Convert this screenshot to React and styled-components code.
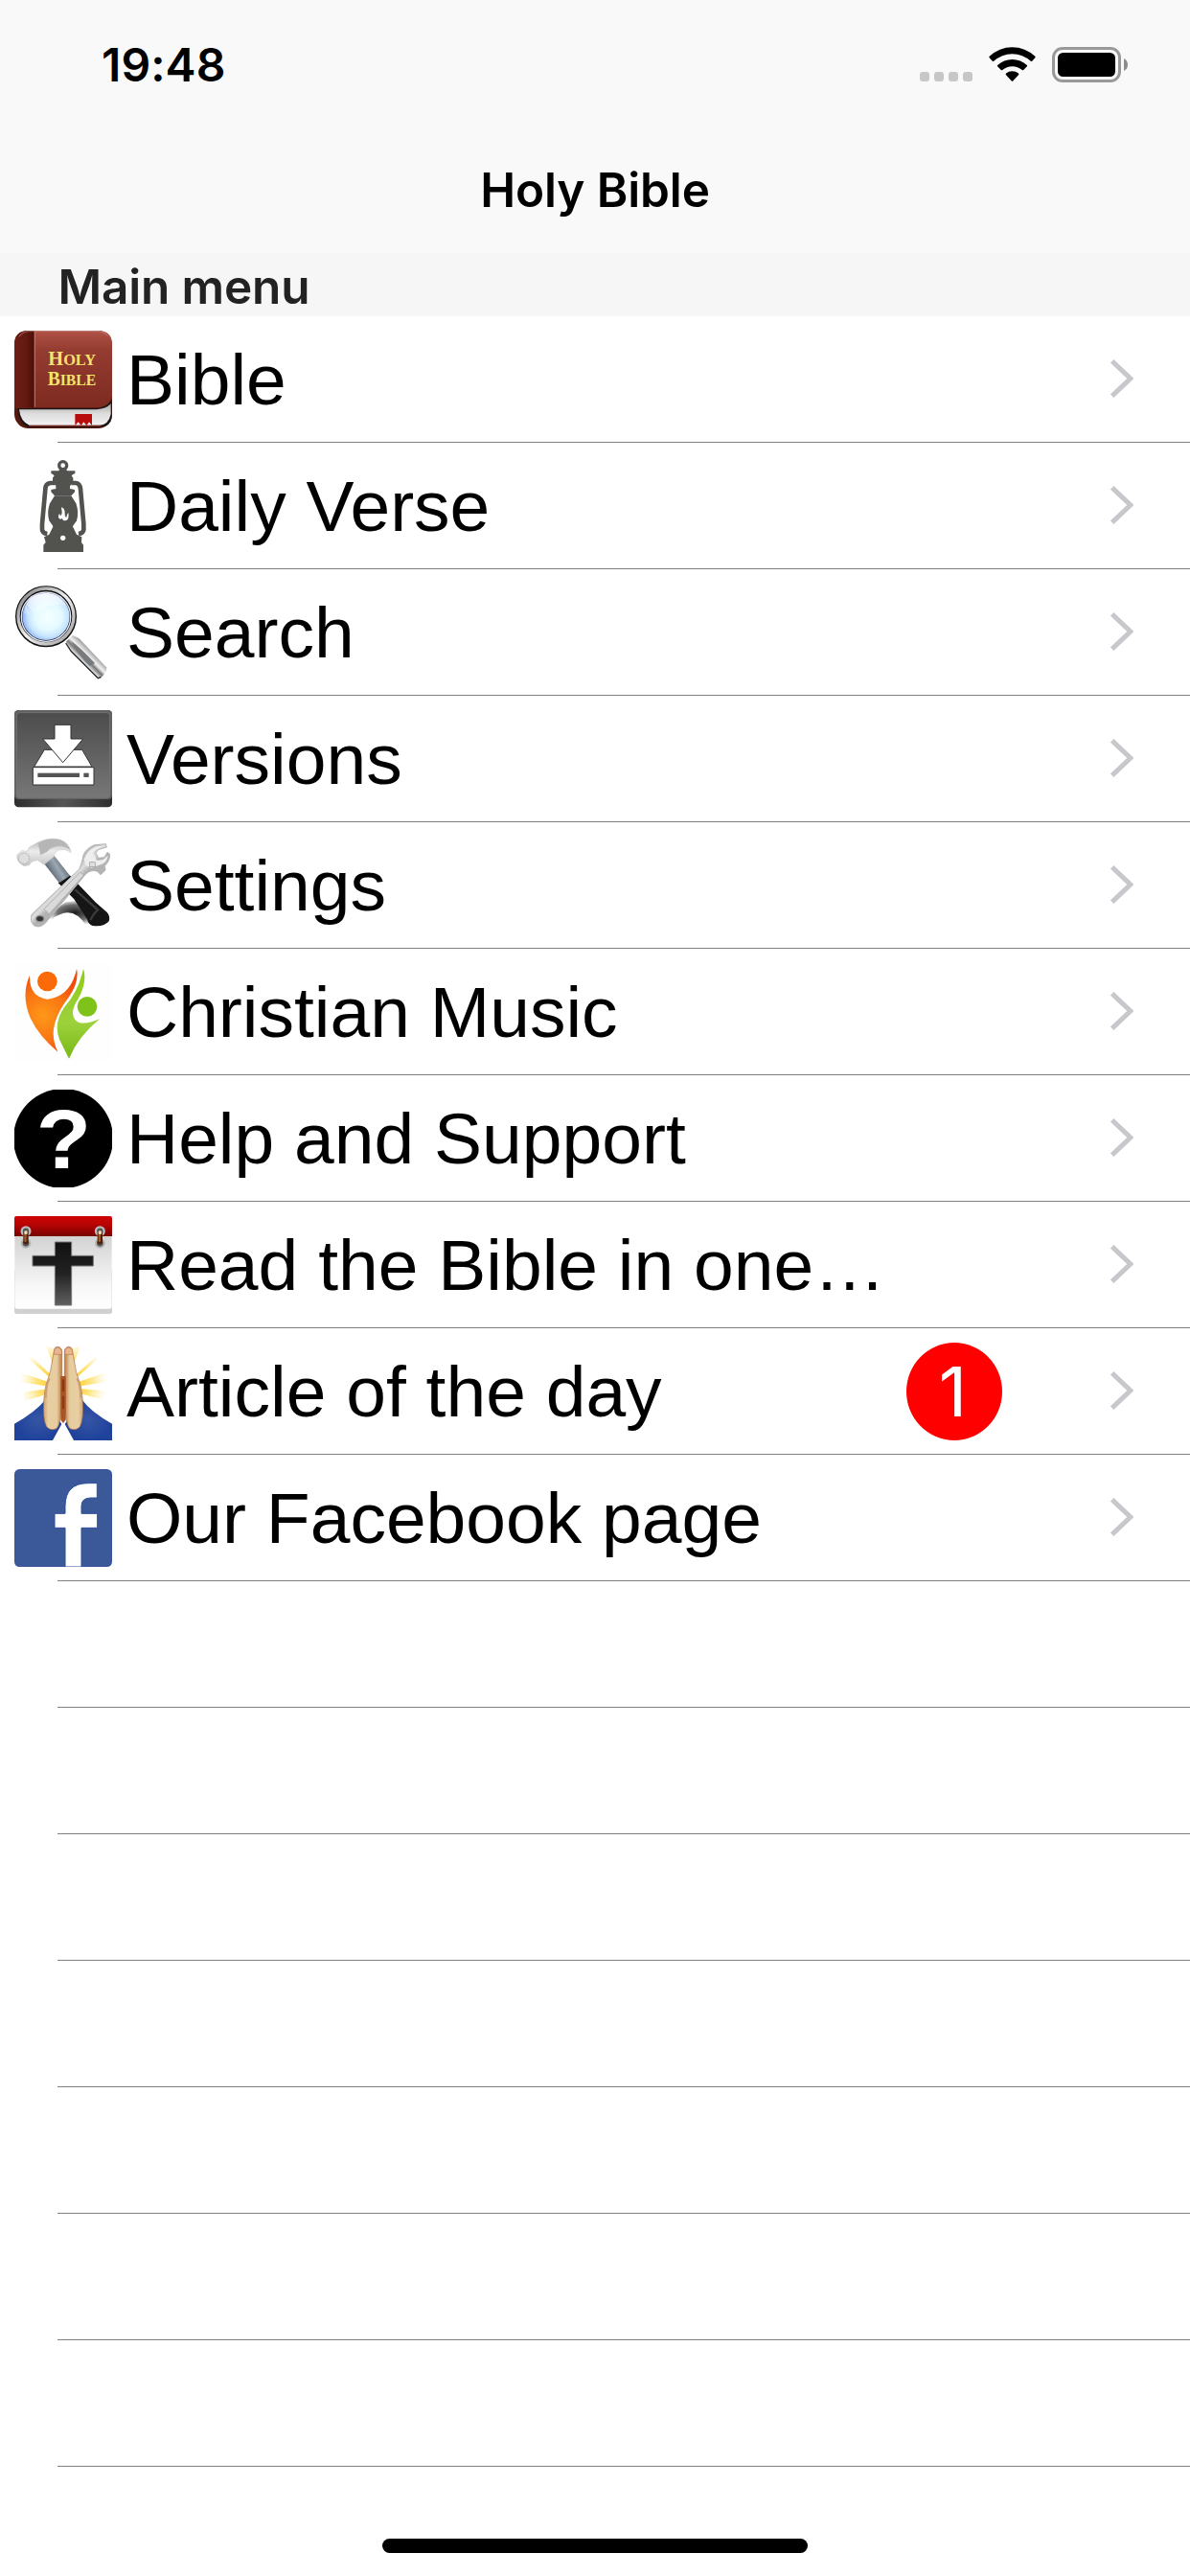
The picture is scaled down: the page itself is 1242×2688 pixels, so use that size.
import React from 'react';
import styled, { createGlobalStyle } from 'styled-components';

const GlobalStyle = createGlobalStyle`
  * {
    box-sizing: border-box;
  }
  body {
    margin: 0;
    background: #fff;
    color: #000;
  }
`;

/* ---------- status bar icons ---------- */

const WifiIcon = () => (
  <svg width="50" height="37" viewBox="0 0 50 37">
    <path d="M0.6 11.2Q0 10.5 0.7 9.8A34.6 34.6 0 0 1 48.3 9.8Q49 10.5 48.4 11.2L45.2 14.8Q44.5 15.5 43.8 14.8A28.4 28.4 0 0 0 5.2 14.8Q4.5 15.5 3.8 14.8Z" />
    <path d="M9.1 20.3Q8.6 19.6 9.2 19A22.6 22.6 0 0 1 39.8 19Q40.4 19.6 39.9 20.3L36.2 24Q35.5 24.6 34.8 24A15.8 15.8 0 0 0 14.2 24Q13.5 24.6 12.8 24Z" />
    <path d="M17.8 28.9Q17.3 28.2 18 27.6A10.6 10.6 0 0 1 31 27.6Q31.7 28.2 31.2 28.9L25.2 35.5Q24.5 36.1 23.8 35.5Z" />
  </svg>
);

const BatteryIcon = () => (
  <svg width="80" height="37" viewBox="0 0 80 37">
    <rect x="1.5" y="1.5" width="69" height="34" rx="9.5" fill="none" stroke="#999" strokeWidth="3" />
    <rect x="6" y="6" width="60" height="25" rx="5.5" />
    <path d="M75 12Q79 14 79 18.5T75 25Z" fill="#8c8c8c" />
  </svg>
);

/* ---------- menu icons ---------- */

const BibleIcon = () => (
  <Icon viewBox="45 45 306 306">
    <defs>
      <linearGradient id="cover" x1="0" y1="0" x2="0" y2="1">
        <stop offset="0" stopColor="#b05246" />
        <stop offset="0.25" stopColor="#953c31" />
        <stop offset="1" stopColor="#7d2a20" />
      </linearGradient>
      <linearGradient id="spine" x1="0" y1="0" x2="1" y2="0">
        <stop offset="0" stopColor="#6a2018" />
        <stop offset="0.6" stopColor="#63190f" />
        <stop offset="1" stopColor="#4a0f09" />
      </linearGradient>
      <linearGradient id="pages" x1="0" y1="0" x2="0" y2="1">
        <stop offset="0" stopColor="#a9a9a9" />
        <stop offset="0.45" stopColor="#dcdcdc" />
        <stop offset="1" stopColor="#f2f2f2" />
      </linearGradient>
    </defs>
    <rect x="45" y="45" width="306" height="306" rx="44" fill="#571810" />
    <path d="M89 45H307Q351 45 351 89V250Q342 285 305 286H45V89Q45 45 89 45Z" fill="url(#cover)" />
    <path d="M89 45H107V286H45V89Q45 45 89 45Z" fill="url(#spine)" />
    <path d="M60 64Q72 47 92 47H306Q326 48 338 62" fill="none" stroke="#c9958c" strokeWidth="2" />
    <path d="M109 48V284" stroke="#c17a70" strokeWidth="3" />
    <path d="M55 288H305Q335 285 350 262V318Q346 343 318 347H86Q57 334 55 288Z" fill="#1c1716" />
    <path d="M60 292H303Q332 290 347 274V306Q340 340 312 341H92Q64 330 60 292Z" fill="url(#pages)" />
    <path d="M92 343H316" stroke="#9d2a24" strokeWidth="3" />
    <path d="M235 306H288V342L279 331L271 342L262 331L254 342L245 331L235 342Z" fill="#b80c0c" />
    <text x="151" y="153" textLength="149" lengthAdjust="spacingAndGlyphs" fontFamily="Liberation Serif, serif" fontWeight="700" fontSize="66" fill="#f4e36c">
      H<tspan fontSize="53">OLY</tspan>
    </text>
    <text x="149" y="217" textLength="152" lengthAdjust="spacingAndGlyphs" fontFamily="Liberation Serif, serif" fontWeight="700" fontSize="66" fill="#f4e36c">
      B<tspan fontSize="53">IBLE</tspan>
    </text>
  </Icon>
);

const LanternIcon = () => (
  <Icon viewBox="45 441 306 306">
    <g fill="#52534f">
      <circle cx="197" cy="467" r="12" fill="none" stroke="#52534f" strokeWidth="10" />
      <path d="M188 479H206L211 484H235V492Q228 494 224 499L229 506V519L219 532V540L234 543V550L223 562H171L160 550V543L175 540V532L165 519V506L170 499Q166 494 160 492V484H183Z" />
      <path d="M171 522H158Q142 524 142 541L132 650V668Q133 679 148 681" fill="none" stroke="#52534f" strokeWidth="14" />
      <path d="M223 522H237Q251 524 252 541L262 650V668Q261 679 246 681" fill="none" stroke="#52534f" strokeWidth="14" />
      <path d="M171 562H223L238 586Q248 614 240 640L226 660H168L154 640Q146 614 156 586Z" />
      <path d="M168 655H226L240 683L256 691L255 708L261 716V738H136V716L143 708L138 691L154 683Z" />
    </g>
    <path d="M192 598Q203 602 203 615Q203 630 208 629Q210 619 214 615Q218 638 205 640Q196 641 195 632Q188 639 183 630Q182 621 187 617L188 624Q194 624 194 613Z" fill="#fff" />
    <circle cx="197" cy="694" r="8" fill="#fff" />
  </Icon>
);

const SearchIcon = () => (
  <Icon viewBox="45 42 306 306">
    <defs>
      <radialGradient id="lens" cx="0.54" cy="0.5" r="0.5">
        <stop offset="0" stopColor="#f4ffff" />
        <stop offset="0.5" stopColor="#e4faff" />
        <stop offset="0.75" stopColor="#c6e4ff" />
        <stop offset="1" stopColor="#7fa2f2" />
      </radialGradient>
      <linearGradient id="rim" x1="0" y1="0" x2="1" y2="1">
        <stop offset="0" stopColor="#777" />
        <stop offset="0.5" stopColor="#f0f0f0" />
        <stop offset="1" stopColor="#999" />
      </linearGradient>
      <linearGradient id="grip" gradientUnits="userSpaceOnUse" x1="245" y1="290" x2="285" y2="250">
        <stop offset="0" stopColor="#222" />
        <stop offset="0.2" stopColor="#eee" />
        <stop offset="0.45" stopColor="#777" />
        <stop offset="0.65" stopColor="#f3f3f3" />
        <stop offset="1" stopColor="#999" />
      </linearGradient>
      <linearGradient id="shine" x1="0.2" y1="0" x2="0.5" y2="1">
        <stop offset="0" stopColor="#fff" />
        <stop offset="1" stopColor="#fff" stopOpacity="0" />
      </linearGradient>
    </defs>
    <path d="M206 224L228 204L248 214L333 304Q336 314 326 326Q316 338 306 338L222 251Z" fill="url(#grip)" />
    <path d="M222 221Q250 240 297 291L281 300Q245 265 222 221Z" fill="#777b7e" />
    <path d="M206 228L222 253L307 338L317 334" fill="none" stroke="#222" strokeWidth="4" />
    <circle cx="144" cy="145" r="85" fill="url(#lens)" stroke="#111" strokeWidth="22" />
    <circle cx="144" cy="144" r="87" fill="none" stroke="url(#rim)" strokeWidth="10" />
    <circle cx="144" cy="146" r="77" fill="none" stroke="#e4e9f8" strokeWidth="4" />
    <path d="M75 135Q80 74 144 72Q190 74 207 110Q150 95 110 140L82 108L98 145Z" fill="url(#shine)" />
  </Icon>
);

const VersionsIcon = () => (
  <Icon viewBox="45 438 306 306">
    <defs>
      <linearGradient id="panel" x1="0" y1="0" x2="0" y2="1">
        <stop offset="0" stopColor="#4c4c4c" />
        <stop offset="1" stopColor="#777" />
      </linearGradient>
      <linearGradient id="edge" x1="0" y1="0" x2="1" y2="0">
        <stop offset="0" stopColor="#2e2e2e" />
        <stop offset="0.5" stopColor="#555" />
        <stop offset="1" stopColor="#2e2e2e" />
      </linearGradient>
    </defs>
    <rect x="45" y="438" width="306" height="304" rx="13" fill="url(#edge)" />
    <rect x="45" y="438" width="306" height="279" rx="13" fill="#626262" />
    <rect x="52" y="446" width="292" height="266" rx="10" fill="url(#panel)" stroke="#7b7b7b" strokeWidth="2" />
    <g stroke="#333" strokeWidth="3" fill="#fff">
      <path d="M139 562H257L288 615H107Z" />
      <path d="M103 617H294V672H103Z" />
      <path d="M171 484H222V528H260L197 602L134 528H171Z" />
    </g>
    <rect x="118" y="635" width="131" height="13" fill="#555" />
    <rect x="262" y="635" width="16" height="13" fill="#555" />
  </Icon>
);

const SettingsIcon = () => (
  <Icon viewBox="45 39 306 306">
    <defs>
      <linearGradient id="head" x1="0" y1="0" x2="0" y2="1">
        <stop offset="0" stopColor="#a9a9a9" />
        <stop offset="0.45" stopColor="#ececec" />
        <stop offset="1" stopColor="#c5c5c5" />
      </linearGradient>
      <linearGradient id="neck" gradientUnits="userSpaceOnUse" x1="150" y1="148" x2="195" y2="120">
        <stop offset="0" stopColor="#59636d" />
        <stop offset="0.6" stopColor="#9ba8b3" />
        <stop offset="1" stopColor="#687581" />
      </linearGradient>
      <linearGradient id="wrench" gradientUnits="userSpaceOnUse" x1="175" y1="195" x2="200" y2="220">
        <stop offset="0" stopColor="#bdbdbd" />
        <stop offset="0.5" stopColor="#dedede" />
        <stop offset="1" stopColor="#b3b3b3" />
      </linearGradient>
      <radialGradient id="shadow">
        <stop offset="0" stopColor="#111" stopOpacity="0.95" />
        <stop offset="0.6" stopColor="#222" stopOpacity="0.65" />
        <stop offset="1" stopColor="#444" stopOpacity="0" />
      </radialGradient>
    </defs>
    <path d="M145 306Q180 260 205 244Q235 238 325 236Q305 246 280 248L318 290L320 318H270Q240 270 200 278Q170 286 152 309Z" fill="url(#shadow)" />
    <path d="M182 184L218 160L300 245L335 276Q346 288 341 304Q325 323 290 318Q276 314 273 298L232 235Z" fill="#151515" />
    <path d="M235 205L306 268Q292 280 283 300" fill="none" stroke="#3b3b3b" strokeWidth="7" />
    <path d="M137 122L170 99L219 161L185 184Z" fill="url(#neck)" />
    <path d="M53 97L68 83L85 85L91 73L119 57Q155 39 189 49Q219 60 222 89Q203 74 181 82Q167 92 169 101L138 127L117 112L99 118L91 128L75 131Q51 119 53 97Z" fill="url(#head)" stroke="#c9c9c9" strokeWidth="2" />
    <path d="M119 60Q156 43 190 51Q213 60 220 83Q205 68 183 68Q158 71 150 85L127 97" fill="#b6b6b6" />
    <circle cx="75" cy="107" r="17" fill="#dedede" stroke="#aaa" strokeWidth="2" />
    <path d="M99 283L248 141Q255 127 262 94Q274 72 297 65L331 62L334 72L309 79L300 89L308 106L327 104L336 88L344 94Q344 116 328 130L330 144L315 158L305 148Q285 140 268 157L142 310Q124 327 106 317Q93 304 99 283Z" fill="url(#wrench)" stroke="#b4b4b4" strokeWidth="3" />
    <path d="M263 110Q273 82 300 70L324 68L301 80L292 91L303 114L323 111L338 98Q337 114 322 124L286 137L268 128Z" fill="#eee" />
    <path d="M138 266L250 151L263 159L154 281Z" fill="#d9d9d9" stroke="#a5a5a5" strokeWidth="2" />
    <rect x="281" y="119" width="17" height="15" fill="#ddd" stroke="#999" strokeWidth="2" />
    <ellipse cx="125" cy="296" rx="12" ry="9" fill="#333" stroke="#888" strokeWidth="4" />
  </Icon>
);

const MusicIcon = () => (
  <Icon viewBox="45 435 306 306">
    <defs>
      <radialGradient id="orange" gradientUnits="userSpaceOnUse" cx="135" cy="600" r="130">
        <stop offset="0" stopColor="#ff9818" />
        <stop offset="0.6" stopColor="#f97413" />
        <stop offset="1" stopColor="#f04b0b" />
      </radialGradient>
      <linearGradient id="green" x1="0" y1="0" x2="0" y2="1">
        <stop offset="0" stopColor="#8dcc15" />
        <stop offset="0.6" stopColor="#9dd13c" />
        <stop offset="1" stopColor="#79b916" />
      </linearGradient>
    </defs>
    <rect x="45" y="435" width="306" height="306" fill="#fefefe" />
    <circle cx="148" cy="492" r="31" fill="#fa6a08" />
    <path d="M93 474Q91 540 148 548Q221 540 240 453Q249 492 216 541Q169 602 167 654Q167 684 181 713Q122 664 95 607Q65 535 93 474Z" fill="url(#orange)" />
    <circle cx="273" cy="571" r="31" fill="#7fc31a" />
    <path d="M261 452Q274 496 244 548Q218 587 234 611Q254 635 312 610Q246 663 216 734Q202 707 187 676Q165 624 203 571Q247 521 261 452Z" fill="url(#green)" />
  </Icon>
);

const HelpIcon = () => (
  <Icon viewBox="45 36 306 306">
    <circle cx="198" cy="189" r="156" fill="#000" />
    <text x="113" y="282" textLength="172" lengthAdjust="spacingAndGlyphs" fontFamily="Liberation Sans, Arial, sans-serif" fontWeight="700" fontSize="262" fill="#fff">?</text>
  </Icon>
);

const CalendarIcon = () => (
  <Icon viewBox="45 432 306 306">
    <defs>
      <linearGradient id="band" x1="0" y1="0" x2="0" y2="1">
        <stop offset="0" stopColor="#cf0505" />
        <stop offset="0.4" stopColor="#b90404" />
        <stop offset="1" stopColor="#780202" />
      </linearGradient>
      <linearGradient id="sheet" x1="0" y1="0" x2="0" y2="1">
        <stop offset="0" stopColor="#cfcfcf" />
        <stop offset="0.7" stopColor="#f7f7f7" />
        <stop offset="1" stopColor="#fff" />
      </linearGradient>
      <linearGradient id="cross" x1="0" y1="0" x2="0" y2="1">
        <stop offset="0" stopColor="#111" />
        <stop offset="0.5" stopColor="#222" />
        <stop offset="1" stopColor="#606060" />
      </linearGradient>
    </defs>
    <rect x="45" y="600" width="306" height="138" rx="7" fill="#d0d0d0" />
    <rect x="46" y="480" width="304" height="242" rx="7" fill="url(#sheet)" />
    <path d="M45 495V438Q45 432 51 432H345Q351 432 351 438V495Z" fill="url(#band)" />
    {[81, 313].map((x) => (
      <g key={x}>
        <circle cx={x} cy="479" r="13" fill="#555" stroke="#bbb" strokeWidth="7" />
        <circle cx={x} cy="517" r="13" fill="#555" stroke="#b5b5b5" strokeWidth="6" />
        <rect x={x - 8} y="480" width="16" height="40" rx="6" fill="#4d2109" />
        <rect x={x - 5} y="479" width="7" height="34" rx="3" fill="#9b5d2a" />
        <rect x={x - 5} y="478" width="10" height="11" rx="4" fill="#f0d9b5" />
      </g>
    ))}
    <path d="M172 513H224V556H292V588H224V711H172V588H102V556H172Z" fill="url(#cross)" stroke="#777" strokeWidth="3" />
  </Icon>
);

const PrayIcon = () => (
  <Icon viewBox="45 33 306 306">
    <defs>
      <radialGradient id="rays" gradientUnits="userSpaceOnUse" cx="198" cy="160" r="140">
        <stop offset="0.3" stopColor="#ffcf31" />
        <stop offset="0.6" stopColor="#ffe47c" />
        <stop offset="1" stopColor="#fff6d0" stopOpacity="0" />
      </radialGradient>
      <linearGradient id="palm" x1="0" y1="0" x2="1" y2="0">
        <stop offset="0" stopColor="#cfa273" />
        <stop offset="0.25" stopColor="#e8cfa2" />
        <stop offset="0.72" stopColor="#e6cc9e" />
        <stop offset="1" stopColor="#bd7a40" />
      </linearGradient>
      <radialGradient id="sleeve">
        <stop offset="0" stopColor="#3655a5" />
        <stop offset="1" stopColor="#1f429b" />
      </radialGradient>
    </defs>
    <path d="M198 175L148 47L165 53ZM198 175L84 67L94 85ZM198 175L60 128L62 153ZM198 175L78 213L78 190ZM198 175L248 47L231 53ZM198 175L314 67L302 85ZM198 175L336 128L334 153ZM198 175L336 213L336 188Z" fill="url(#rays)" stroke="url(#rays)" strokeWidth="6" />
    <path d="M45 287Q110 252 143 211L193 288L165 339H45Z" fill="url(#sleeve)" />
    <path d="M351 287Q286 252 256 211L203 288L231 339H351Z" fill="url(#sleeve)" />
    <path d="M190 73H206V138H190Z" fill="#fff" />
    <path d="M169 61Q169 46 181 46Q194 48 194 62V200Q192 290 177 302Q158 311 145 295Q134 270 137 218Q140 170 151 145Q159 125 163 93Z" fill="url(#palm)" stroke="#a86d42" strokeWidth="2" />
    <g transform="translate(396 0) scale(-1 1)">
      <path d="M169 61Q169 46 181 46Q194 48 194 62V200Q192 290 177 302Q158 311 145 295Q134 270 137 218Q140 170 151 145Q159 125 163 93Z" fill="url(#palm)" stroke="#a86d42" strokeWidth="2" />
    </g>
    <path d="M190 138H206V275L198 285L190 275Z" fill="#a85424" />
    <path d="M198 148V186M198 200V240" stroke="#8a3a15" strokeWidth="7" />
    <path d="M155 145Q144 166 143 206M241 145Q252 166 253 206" fill="none" stroke="#cf9d78" strokeWidth="6" />
    <path d="M169 70V60Q172 48 181 48Q192 50 193 60V70ZM203 70V60Q204 49 214 48Q226 50 227 60V70Z" fill="#e8b58f" stroke="#bd7550" strokeWidth="2" />
  </Icon>
);

const FacebookIcon = () => (
  <Icon viewBox="45 429 306 306">
    <rect x="45" y="429" width="306" height="306" rx="16" fill="#3b5998" />
    <path d="M204 735V613H171V568H204V545Q204 473 276 473H304V519H284Q255 519 255 545V568H305V613H255V735Z" fill="#fff" stroke="#2c4f9c" strokeWidth="3" />
  </Icon>
);

const Chevron = () => (
  <ChevronSvg viewBox="0 0 24 40">
    <path d="M1.7 1.8L20.8 20L1.7 38.2" />
  </ChevronSvg>
);

const menuItems = [
  { title: 'Bible', icon: BibleIcon },
  { title: 'Daily Verse', icon: LanternIcon },
  { title: 'Search', icon: SearchIcon },
  { title: 'Versions', icon: VersionsIcon },
  { title: 'Settings', icon: SettingsIcon },
  { title: 'Christian Music', icon: MusicIcon },
  { title: 'Help and Support', icon: HelpIcon },
  { title: 'Read the Bible in one…', icon: CalendarIcon },
  { title: 'Article of the day', icon: PrayIcon, badge: 1 },
  { title: 'Our Facebook page', icon: FacebookIcon },
];

const EMPTY_ROWS = 7;

function App() {
  return (
    <Screen>
      <GlobalStyle />
      <StatusBar>
        <Time>19:48</Time>
        <StatusIcons>
          <Signal>
            <Dot />
            <Dot />
            <Dot />
            <Dot />
          </Signal>
          <WifiIcon />
          <BatteryIcon />
        </StatusIcons>
      </StatusBar>
      <NavBar>
        <NavTitle>Holy Bible</NavTitle>
      </NavBar>
      <SectionHeader>Main menu</SectionHeader>
      <Menu>
        {menuItems.map(({ title, icon: ItemIcon, badge }) => (
          <Row key={title}>
            <ItemIcon />
            <Label>{title}</Label>
            {badge && <Badge>{badge}</Badge>}
            <Chevron />
          </Row>
        ))}
        {Array.from({ length: EMPTY_ROWS }, (_, i) => (
          <Row key={i} />
        ))}
      </Menu>
      <HomeArea>
        <HomeIndicator />
      </HomeArea>
    </Screen>
  );
}

const Screen = styled.div`
  display: flex;
  flex-direction: column;
  width: 1242px;
  height: 2688px;
  overflow: hidden;
  background: #fff;
  font-family: Inter, 'Liberation Sans', sans-serif;
`;

const StatusBar = styled.header`
  display: flex;
  justify-content: space-between;
  height: 132px;
  padding: 0 64px 0 106px;
  background: #f9f9f9;
`;

const Time = styled.span`
  padding-top: 39px;
  font-size: 48px;
  font-weight: 600;
  line-height: 58px;
  letter-spacing: 0.1px;
`;

const StatusIcons = styled.div`
  display: flex;
  align-items: flex-end;
  height: 86px;
`;

const Signal = styled.div`
  display: flex;
  gap: 5px;
  margin: 0 17px 1px 0;

  & + svg {
    margin-right: 16px;
  }
`;

const Dot = styled.i`
  width: 10px;
  height: 10px;
  border-radius: 3px;
  background: #c7c7c7;
`;

const NavBar = styled.div`
  display: flex;
  align-items: center;
  justify-content: center;
  height: 132px;
  background: #f9f9f9;
`;

const NavTitle = styled.h1`
  margin: 0;
  font-size: 49.5px;
  font-weight: 600;
  line-height: 60px;
  letter-spacing: -0.1px;
`;

const SectionHeader = styled.h2`
  height: 66px;
  margin: 0;
  padding: 5px 0 0 60.5px;
  background: #f6f6f6;
  color: #222;
  font-size: 49.5px;
  font-weight: 570;
  line-height: 60px;
  letter-spacing: -0.15px;
`;

const Menu = styled.ul`
  flex: 1;
  margin: 0;
  padding: 0;
  list-style: none;
`;

const Row = styled.li`
  display: flex;
  align-items: center;
  height: 132px;
  padding: 0 59px 0 15px;
  background: linear-gradient(#808080, #808080) 60px 100% / 100% 1px no-repeat;
`;

const Icon = styled.svg`
  flex: none;
  width: 102px;
  height: 102px;
`;

const ChevronSvg = styled.svg`
  flex: none;
  width: 24px;
  height: 40px;
  margin-bottom: 3px;
  fill: none;
  stroke: #c7c7cc;
  stroke-width: 5;
`;

const Label = styled.span`
  flex: 1;
  padding-left: 15px;
  font-family: 'Liberation Sans', Arial, sans-serif;
  font-size: 75px;
  line-height: 132px;
  white-space: nowrap;
`;

const Badge = styled.span`
  width: 100px;
  height: 102px;
  margin-right: 113px;
  padding-right: 3px;
  border-radius: 50%;
  background: #f00;
  color: #fff;
  font-size: 72px;
  font-weight: 400;
  line-height: 101px;
  text-align: center;
`;

const HomeArea = styled.footer`
  display: flex;
  justify-content: center;
  height: 39px;
`;

const HomeIndicator = styled.div`
  width: 444px;
  height: 15px;
  border-radius: 8px;
  background: #000;
`;

export default App;
